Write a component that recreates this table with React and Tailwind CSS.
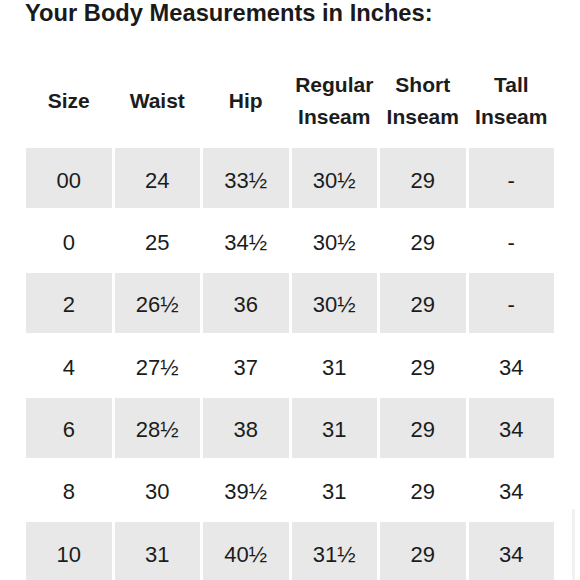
import React from 'react';

const headers = [
  ['Size'],
  ['Waist'],
  ['Hip'],
  ['Regular', 'Inseam'],
  ['Short', 'Inseam'],
  ['Tall', 'Inseam'],
];

const rows = [
  ['00', '24', '33½', '30½', '29', '-'],
  ['0', '25', '34½', '30½', '29', '-'],
  ['2', '26½', '36', '30½', '29', '-'],
  ['4', '27½', '37', '31', '29', '34'],
  ['6', '28½', '38', '31', '29', '34'],
  ['8', '30', '39½', '31', '29', '34'],
  ['10', '31', '40½', '31½', '29', '34'],
];

const App = () => {
  return (
    <div className="relative h-[580px] w-[580px] overflow-hidden bg-white text-[#1c1c1c] font-['Liberation_Sans',Arial,sans-serif]">
      <h1 className="pl-[25px] text-[23.7px] font-bold leading-[26px] text-[#1a1a1a]">
        Your Body Measurements in Inches:
      </h1>

      {/* size chart */}
      <div className="ml-[26px] mt-[27px] grid grid-cols-[repeat(6,85.5px)] gap-x-[3px] gap-y-[2.33px]">
        {headers.map((h, i) => (
          <div
            key={i}
            className="flex h-[93px] flex-col items-center justify-center pt-[2px] text-[21px] font-bold leading-[32px]"
          >
            {h.map((line) => (
              <span key={line}>{line}</span>
            ))}
          </div>
        ))}

        {rows.map((row, r) =>
          row.map((cell, c) => (
            <div
              key={r + '-' + c}
              className={
                'flex h-[60px] items-center justify-center pt-1 text-[22px] ' +
                (r % 2 === 0 ? 'bg-[#e8e8e8]' : 'bg-white')
              }
            >
              {cell}
            </div>
          ))
        )}
      </div>

      {/* faint scroll edge at bottom right */}
      <div className="absolute right-[5px] top-[509px] h-[80px] w-[3px] bg-[#f1f1f1]" />
    </div>
  );
};

export default App;
